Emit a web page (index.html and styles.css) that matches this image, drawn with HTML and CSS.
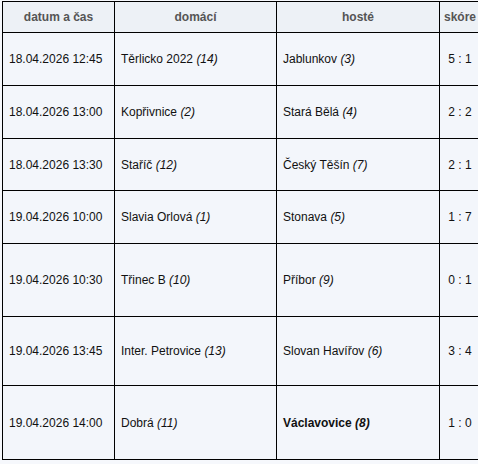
FILE: index.html
```html
<!DOCTYPE html>
<html lang="cs">
<head>
<meta charset="utf-8">
<link rel="stylesheet" href="styles.css">
</head>
<body>
<table class="results">
  <thead>
    <tr class="head-row">
      <th class="c-date">datum a čas</th>
      <th class="c-home">domácí</th>
      <th class="c-away">hosté</th>
      <th class="c-score">skóre</th>
    </tr>
  </thead>
  <tbody>
    <tr class="row-52">
      <td>18.04.2026 12:45</td>
      <td>Těrlicko 2022 <i>(14)</i></td>
      <td>Jablunkov <i>(3)</i></td>
      <td class="score">5 : 1</td>
    </tr>
    <tr class="row-52">
      <td>18.04.2026 13:00</td>
      <td>Kopřivnice <i>(2)</i></td>
      <td>Stará Bělá <i>(4)</i></td>
      <td class="score">2 : 2</td>
    </tr>
    <tr class="row-51">
      <td>18.04.2026 13:30</td>
      <td>Staříč <i>(12)</i></td>
      <td>Český Těšín <i>(7)</i></td>
      <td class="score">2 : 1</td>
    </tr>
    <tr class="row-52">
      <td>19.04.2026 10:00</td>
      <td>Slavia Orlová <i>(1)</i></td>
      <td>Stonava <i>(5)</i></td>
      <td class="score">1 : 7</td>
    </tr>
    <tr class="row-72">
      <td>19.04.2026 10:30</td>
      <td>Třinec B <i>(10)</i></td>
      <td>Příbor <i>(9)</i></td>
      <td class="score">0 : 1</td>
    </tr>
    <tr class="row-68">
      <td>19.04.2026 13:45</td>
      <td>Inter. Petrovice <i>(13)</i></td>
      <td>Slovan Havířov <i>(6)</i></td>
      <td class="score">3 : 4</td>
    </tr>
    <tr class="row-73">
      <td>19.04.2026 14:00</td>
      <td>Dobrá <i>(11)</i></td>
      <td><b>Václavovice <i>(8)</i></b></td>
      <td class="score">1 : 0</td>
    </tr>
  </tbody>
</table>
</body>
</html>
```
FILE: styles.css
```css
html, body {
  margin: 0;
  padding: 0;
  background: #f6f8fc;
}
body {
  padding: 1px 0 0 2px;
  font-family: "Liberation Sans", Arial, sans-serif;
  font-size: 12px;
  color: #111;
}
.results {
  border-collapse: collapse;
  width: 475px;
  table-layout: fixed;
  background: #f3f6fb;
}
.results th, .results td {
  border: 1px solid #000;
  padding: 0 6px;
  vertical-align: middle;
  text-align: left;
  white-space: nowrap;
}
.results th {
  background: #edf1f6;
  color: #555;
  font-weight: bold;
  text-align: center;
}
.c-date { width: 99px; }
.c-home { width: 149px; }
.c-away { width: 150px; }
.results th.c-score { width: 40px; padding: 0; }
.results td.score { text-align: center; padding: 0; }
.head-row { height: 31px; }
.row-51 { height: 52px; }
.row-52 { height: 53px; }
.row-68 { height: 69px; }
.row-72 { height: 73px; }
.row-73 { height: 74px; }
```
